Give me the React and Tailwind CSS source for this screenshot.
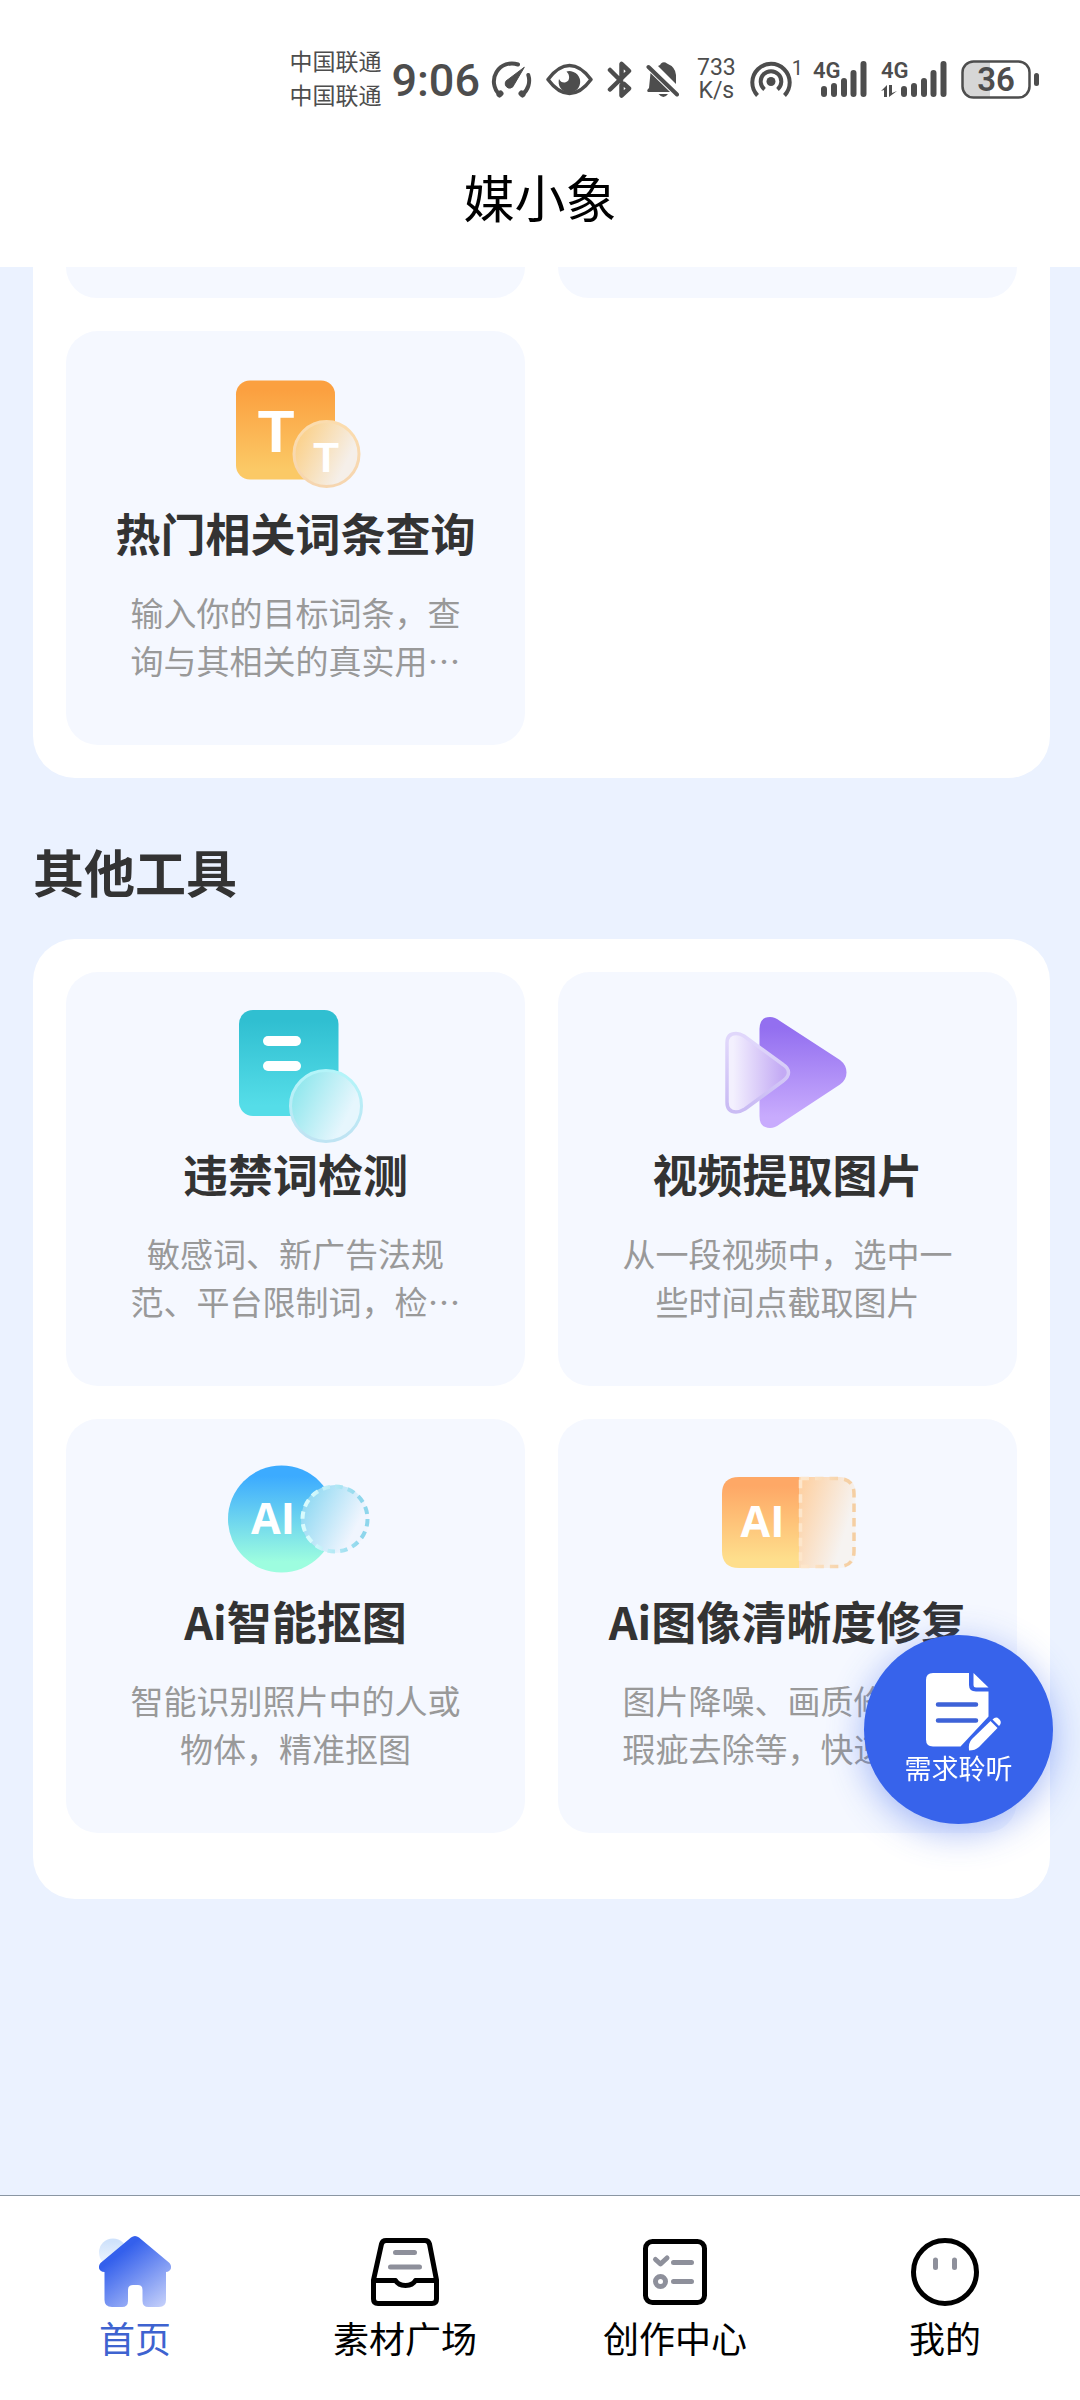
import React, { useState } from 'react';

const STATUS_GREY = '#4d4d4d';

/* ---------- status bar ---------- */

const GaugeIcon = () => (
  <svg width="42" height="38" viewBox="0 0 42 38" fill="none" stroke={STATUS_GREY} strokeLinecap="round" aria-hidden="true">
    <path d="M9.5 34.5A18 18 0 0 1 28 4.5" strokeWidth="4" />
    <path d="M38.3 15A18 18 0 0 1 32.5 34.5" strokeWidth="4" />
    <path d="M9.5 34.5l1-1M32.5 34.5l-1-1" strokeWidth="6" />
    <path d="M34 7.5L18 19.5A4.5 4.5 0 1 0 24 25Z" fill={STATUS_GREY} strokeWidth="1" strokeLinejoin="round" />
  </svg>
);

const EyeIcon = () => (
  <svg width="47" height="33" viewBox="0 0 47 33" aria-hidden="true">
    <path
      d="M2 16.5C9 7 16 2.5 23.5 2.5S38 7 45 16.5C38 26 31 30.5 23.5 30.5S9 26 2 16.5Z"
      fill="none"
      stroke={STATUS_GREY}
      strokeWidth="3.5"
      strokeLinejoin="round"
    />
    <path d="M20.5 8.5A10.8 10.8 0 1 1 13 16Q15 20 19 19.5Q24 18 23 13Q22.5 10.5 20.5 8.5Z" fill={STATUS_GREY} />
  </svg>
);

const BluetoothIcon = () => (
  <svg width="25" height="37" viewBox="0 0 25 37" fill="none" stroke={STATUS_GREY} strokeWidth="4.5" strokeLinecap="round" strokeLinejoin="round" aria-hidden="true">
    <path d="M3 28.5L22 10 14.5 3V17.5M3 9L14 20M17 23L22 27.5 14.5 34.5V24" />
  </svg>
);

const MutedBellIcon = () => (
  <svg width="33" height="37" viewBox="0 0 33 37" fill={STATUS_GREY} aria-hidden="true">
    <path d="M12 5Q14.5 4 15 2.500Q18 0 21 2.500Q29.500 6 30 14V23Z" />
    <path d="M4.5 12L24 31H2Q0 29.5 3 27Z" />
    <path d="M12.5 33H22Q17.5 39 12.5 33Z" />
    <path d="M2.5 6L31 33.5" stroke={STATUS_GREY} strokeWidth="4" strokeLinecap="round" />
  </svg>
);

const HotspotIcon = () => (
  <svg width="42" height="38" viewBox="0 0 42 38" fill="none" stroke={STATUS_GREY} strokeWidth="4" aria-hidden="true">
    <path d="M7.5 35.5A18.7 18.7 0 1 1 34.5 35.5" />
    <path d="M14.5 29.5A10.3 10.3 0 1 1 27.5 29.5" />
    <circle cx="21" cy="21.5" r="4.5" fill={STATUS_GREY} stroke="none" />
  </svg>
);

const SignalIcon = ({ data }) => (
  <svg
    width={data ? 66 : 54}
    height="38"
    viewBox={data ? '-12 0 66 38' : '0 0 54 38'}
    className="overflow-visible"
    aria-hidden="true"
  >
    <text x={data ? -12 : 0} y="18" fontSize="22" fontWeight="600" fontFamily="Roboto, sans-serif" fill={STATUS_GREY}>
      4G
    </text>
    {data ? <path d="M-12 31l6-6v12h-3v-7zM-4 25h3v8l5-2-8 6z" fill={STATUS_GREY} /> : null}
    <path d="M11 29V34M21 26V34M31 21V34M40.5 13V34M50.5 4V34" stroke={STATUS_GREY} strokeWidth="6" strokeLinecap="round" />
  </svg>
);

const BatteryIcon = () => (
  <svg width="78" height="39" viewBox="0 0 78 39" aria-hidden="true">
    <path d="M12 2H29V37H12Q2 37 2 27V12Q2 2 12 2Z" fill="#d6d6d6" />
    <rect x="1.5" y="1.5" width="67" height="36" rx="11" fill="none" stroke={STATUS_GREY} strokeWidth="2.5" />
    <rect x="73" y="13" width="5" height="13" rx="2.5" fill={STATUS_GREY} />
    <text x="35" y="31" textAnchor="middle" fontSize="33" fontWeight="600" fontFamily="Roboto, sans-serif" fill={STATUS_GREY}>
      36
    </text>
  </svg>
);

const StatusBar = () => (
  <div className="flex h-[158px] items-center justify-end gap-[14px] pr-[41px] text-[#4d4d4d]">
    <div className="pb-1 text-[23px] leading-[34px]">
      <div>中国联通</div>
      <div>中国联通</div>
    </div>
    <div className="-mx-1 pt-1 font-[Roboto] text-[45px] font-medium leading-[60px]">9:06</div>
    <GaugeIcon />
    <EyeIcon />
    <BluetoothIcon />
    <MutedBellIcon />
    <div className="ml-1 text-center font-[Roboto] text-[23px] leading-[23px]">
      <div>733</div>
      <div>K/s</div>
    </div>
    <div className="-mr-1 flex items-start">
      <HotspotIcon />
      <span className="-mt-1 font-[Roboto] text-[20px] leading-6">1</span>
    </div>
    <SignalIcon />
    <SignalIcon data />
    <BatteryIcon />
  </div>
);

/* ---------- tool icons ---------- */

const Gradient = ({ id, from, to, horizontal, diagonal }) => (
  <linearGradient id={id} x1="0" y1="0" x2={horizontal || diagonal ? 1 : 0} y2={horizontal ? 0 : diagonal ? 0.5 : 1}>
    <stop offset="0.1" stopColor={from} />
    <stop offset="0.9" stopColor={to} />
  </linearGradient>
);

const HotWordsIcon = () => (
  <svg width="140" height="140" viewBox="0 0 140 140" aria-hidden="true">
    <defs>
      <Gradient id="hot-square" from="#fba040" to="#fbc966" />
      <Gradient id="hot-circle" from="#fbcf85" to="#f5efe9" diagonal />
      <Gradient id="hot-ring" from="#fbdcae" to="#f6d6b0" />
    </defs>
    <rect x="10" y="16.5" width="99" height="99" rx="14" fill="url(#hot-square)" />
    <circle cx="100.5" cy="90" r="32.5" fill="url(#hot-circle)" stroke="url(#hot-ring)" strokeWidth="3" />
    <g fill="#fff" fontFamily="'Liberation Sans', sans-serif" fontWeight="700" textAnchor="middle">
      <text x="50" y="88" fontSize="60">T</text>
      <text x="100" y="108" fontSize="42">T</text>
    </g>
  </svg>
);

const BannedWordsIcon = () => (
  <svg width="140" height="140" viewBox="0 0 140 140" aria-hidden="true">
    <defs>
      <Gradient id="ban-square" from="#30bfd1" to="#55dde8" />
      <Gradient id="ban-circle" from="#8be6ec" to="#e6f6fd" diagonal />
      <Gradient id="ban-ring" from="#b4f4f9" to="#bfe4f3" />
    </defs>
    <rect x="13" y="5" width="99.5" height="106" rx="14" fill="url(#ban-square)" />
    <rect x="37" y="31" width="38" height="10" rx="5" fill="#fff" />
    <rect x="37" y="56" width="38" height="10" rx="5" fill="#fff" />
    <circle cx="100" cy="101" r="35.5" fill="url(#ban-circle)" stroke="url(#ban-ring)" strokeWidth="3" />
  </svg>
);

const VideoFramesIcon = () => (
  <svg width="140" height="140" viewBox="1 0 140 140" aria-hidden="true">
    <defs>
      <Gradient id="video-big" from="#936ff0" to="#c8abfd" />
      <Gradient id="video-small" from="#f3f0fe" to="#c3aaf4" horizontal />
      <Gradient id="video-ring" from="#e0d7fb" to="#cabcf4" />
    </defs>
    <path
      d="M42.5 24Q42.5 12 53 12Q58 12 63 16L123 55Q129.5 60 129.5 67.5Q129.5 75 123 79.5L63 119Q58 123 53 123Q42.5 123 42.5 111Z"
      fill="url(#video-big)"
    />
    <path
      d="M10 38Q10 28.5 19 28.5Q23 28.5 27 31L66 59.5Q71.5 63 71.5 67.5Q71.5 72 66 76L28 104Q23 107 19 107Q10 107 10 97Z"
      fill="url(#video-small)"
      stroke="url(#video-ring)"
      strokeWidth="3.5"
    />
  </svg>
);

const CutoutIcon = () => (
  <svg width="140" height="140" viewBox="0 0 140 140" className="overflow-visible" aria-hidden="true">
    <defs>
      <Gradient id="cut-disc" from="#3cabff" to="#9dfddf" />
      <Gradient id="cut-circle" from="#8cd8f2" to="#f0f5fe" diagonal />
      <Gradient id="cut-ring" from="#d8fbfd" to="#8ed6ec" horizontal />
    </defs>
    <circle cx="55.5" cy="67" r="53.5" fill="url(#cut-disc)" />
    <circle cx="109" cy="67" r="34" fill="url(#cut-circle)" />
    <circle cx="109" cy="67" r="32.5" fill="none" stroke="url(#cut-ring)" strokeWidth="4" strokeDasharray="7.5 5.26" />
    <text x="47" y="82" fontSize="43" fontWeight="700" textAnchor="middle" fill="#fff" fontFamily="'Open Sans', sans-serif">
      AI
    </text>
  </svg>
);

const SharpenIcon = () => (
  <svg width="140" height="140" viewBox="1 0 140 140" aria-hidden="true">
    <defs>
      <Gradient id="sharp-left" from="#fea866" to="#fede8c" />
      <Gradient id="sharp-right" from="#fdd2a6" to="#f6f3f1" diagonal />
      <Gradient id="sharp-ring" from="#fde6cb" to="#f5cfa3" horizontal />
    </defs>
    <path d="M82 25H22Q5 25 5 42V99Q5 116 22 116H82Z" fill="url(#sharp-left)" />
    <path d="M82 25H122Q138.5 25 138.5 42V99Q138.5 116 122 116H82Z" fill="url(#sharp-right)" />
    <path
      d="M83.5 26.5H122Q137 27 137 42V99Q137 114 122 114.5H83.5Z"
      fill="none"
      stroke="url(#sharp-ring)"
      strokeWidth="3.5"
      strokeDasharray="8.5 6"
    />
    <text x="45.5" y="85" fontSize="43" fontWeight="700" textAnchor="middle" fill="#fff" fontFamily="'Open Sans', sans-serif">
      AI
    </text>
  </svg>
);

/* ---------- tab icons ---------- */

const HomeIcon = () => (
  <svg width="72" height="72" viewBox="0 0 72 72" aria-hidden="true">
    <defs>
      <linearGradient id="home-body" x1="0.2" y1="0.1" x2="0.9" y2="1">
        <stop offset="0.15" stopColor="#3460ec" />
        <stop offset="1" stopColor="#c5d0fa" />
      </linearGradient>
      <Gradient id="home-sun" from="#cfe2fb" to="#eef5fe" />
    </defs>
    <circle cx="14" cy="16.5" r="14" fill="url(#home-sun)" />
    <path
      d="M32 1.5Q36 -1.5 40 1.5L70.5 27Q74 32 70 35Q69 36 67 36V64Q67 71 60 71H49.5Q43.5 71 43.5 65V54Q43.5 49 39 49H34Q29 49 29 54V65Q29 71 23 71H13Q5.5 71 5.5 64V36Q3 36 2 35Q-2 32 1.5 27Z"
      fill="url(#home-body)"
    />
  </svg>
);

const InboxIcon = () => (
  <svg width="72" height="72" viewBox="0 0 72 72" fill="none" strokeWidth="5" strokeLinecap="round" strokeLinejoin="round" aria-hidden="true">
    <path
      d="M4.5 44L12.5 8Q13.5 4.5 17 4.5H56Q59.5 4.5 60.5 8L67.5 44V63Q67.5 67.5 63 67.5H9Q4.5 67.5 4.5 63ZM4.5 44.5H26.5Q29.5 49.5 36.5 49.5T46.5 44.5H67.5"
      stroke="#000"
    />
    <path d="M26.5 16.5H45.5M21.5 31H50.5" stroke="#8e909b" />
  </svg>
);

const ChecklistIcon = () => (
  <svg width="72" height="72" viewBox="0 0 72 72" fill="none" strokeWidth="5" strokeLinecap="round" strokeLinejoin="round" aria-hidden="true">
    <rect x="6.5" y="5.5" width="59" height="61" rx="7" stroke="#000" />
    <path d="M16.5 23.5L21.5 28L28 22M34.5 26.5H52.5M34.5 45.5H52.5" stroke="#8e909b" />
    <circle cx="21.5" cy="45.5" r="5" stroke="#8e909b" />
  </svg>
);

const FaceIcon = () => (
  <svg width="72" height="72" viewBox="0 0 72 72" fill="none" strokeWidth="5" strokeLinecap="round" aria-hidden="true">
    <circle cx="36" cy="36" r="31.5" stroke="#000" />
    <path d="M26.5 24V31.5M45.5 24V31.5" stroke="#8e909b" />
  </svg>
);

const NoteIcon = () => (
  <svg width="80" height="80" viewBox="0 0 80 80" fill="#fff" className="overflow-visible" aria-hidden="true">
    <g transform="translate(4 0)">
      <path d="M10 3H46V15Q46 21.5 53 21.5H65.5V46.5L37.5 76.5H10Q3 76.5 3 69.5V10Q3 3 10 3Z" />
      <path d="M50.5 3L65.5 17.5H53Q50.5 17.5 50.5 15Z" />
      <path d="M15 34.5H53M15 50.5H53" stroke="#3e63d8" strokeWidth="4.5" strokeLinecap="round" />
      <path d="M46 80.5Q45 73 49 69L67.5 51L74.5 58L56 77Q52 80.5 46 80.5Z" />
      <path d="M69.5 49.5Q73 46 76 49L77 50Q79 53 76 56Z" />
    </g>
  </svg>
);

/* ---------- data ---------- */

const HOT_TOOLS = [
  { title: '热门相关词条查询', desc: '输入你的目标词条，查询与其相关的真实用…', Icon: HotWordsIcon }
];

const OTHER_TOOLS = [
  { title: '违禁词检测', desc: '敏感词、新广告法规范、平台限制词，检…', Icon: BannedWordsIcon },
  { title: '视频提取图片', desc: '从一段视频中，选中一些时间点截取图片', Icon: VideoFramesIcon },
  { title: 'Ai智能抠图', desc: '智能识别照片中的人或物体，精准抠图', Icon: CutoutIcon },
  { title: 'Ai图像清晰度修复', desc: '图片降噪、画质修复、瑕疵去除等，快速提…', Icon: SharpenIcon }
];

const TABS = [
  { key: 'home', label: '首页', Icon: HomeIcon },
  { key: 'materials', label: '素材广场', Icon: InboxIcon },
  { key: 'create', label: '创作中心', Icon: ChecklistIcon },
  { key: 'mine', label: '我的', Icon: FaceIcon }
];

const ToolCard = ({ title, desc, Icon }) => (
  <a href="#" className="flex flex-col items-center rounded-[32px] bg-[#f5f8ff] px-16 pt-[33px] pb-[61px] text-center">
    <Icon />
    <h3 className="whitespace-nowrap text-[45px] font-bold leading-[58px] text-[#333]">{title}</h3>
    <p className="mt-[26px] w-[330px] text-[33px] leading-[48px] text-[#999]">{desc}</p>
  </a>
);

const App = () => {
  const [tab, setTab] = useState('home');

  return (
    <div
      lang="zh-CN"
      className="flex min-h-screen flex-col bg-[#ebf2ff] font-['Noto_Sans_CJK_SC',sans-serif]"
    >
      <header className="bg-white">
        <StatusBar />
        <h1 className="pb-[33px] text-center text-[51px] leading-[76px] text-black">媒小象</h1>
      </header>

      <main className="flex-1 pr-[30px] pl-[33px]">
        <section className="rounded-b-[42px] bg-white px-[33px] pb-[33px]">
          {/* tail of the row scrolled under the header */}
          <div className="grid grid-cols-2 gap-[33px]">
            <div className="h-[31px] rounded-b-[32px] bg-[#f5f8ff]" />
            <div className="h-[31px] rounded-b-[32px] bg-[#f5f8ff]" />
          </div>
          <div className="mt-[33px] grid grid-cols-2 gap-[33px]">
            {HOT_TOOLS.map((tool) => (
              <ToolCard key={tool.title} {...tool} />
            ))}
          </div>
        </section>

        <h2 className="pt-[57px] pb-[32px] text-[51px] font-bold leading-[72px] text-[#333]">其他工具</h2>

        <section className="rounded-[42px] bg-white px-[33px] pt-[33px] pb-[66px]">
          <div className="grid grid-cols-2 gap-[33px]">
            {OTHER_TOOLS.map((tool) => (
              <ToolCard key={tool.title} {...tool} />
            ))}
          </div>
        </section>
      </main>

      <button
        type="button"
        className="fixed right-[27px] bottom-[576px] flex size-[189px] flex-col items-center rounded-full bg-[#3763eb] pt-[35px] text-white shadow-[0_8px_36px_rgba(55,99,235,0.45)]"
      >
        <NoteIcon />
        <span className="text-[27px] leading-9">需求聆听</span>
      </button>

      <nav className="sticky bottom-0 grid grid-cols-4 border-t border-[#8a96a3] bg-white pt-10 pb-[41px]">
        {TABS.map(({ key, label, Icon }) => (
          <button key={key} type="button" className="flex flex-col items-center gap-[7px]" onClick={() => setTab(key)}>
            <Icon />
            <span className={`text-[36px] leading-[44px] ${tab === key ? 'text-[#3e63d0]' : 'text-black'}`}>{label}</span>
          </button>
        ))}
      </nav>
    </div>
  );
};

export default App;
